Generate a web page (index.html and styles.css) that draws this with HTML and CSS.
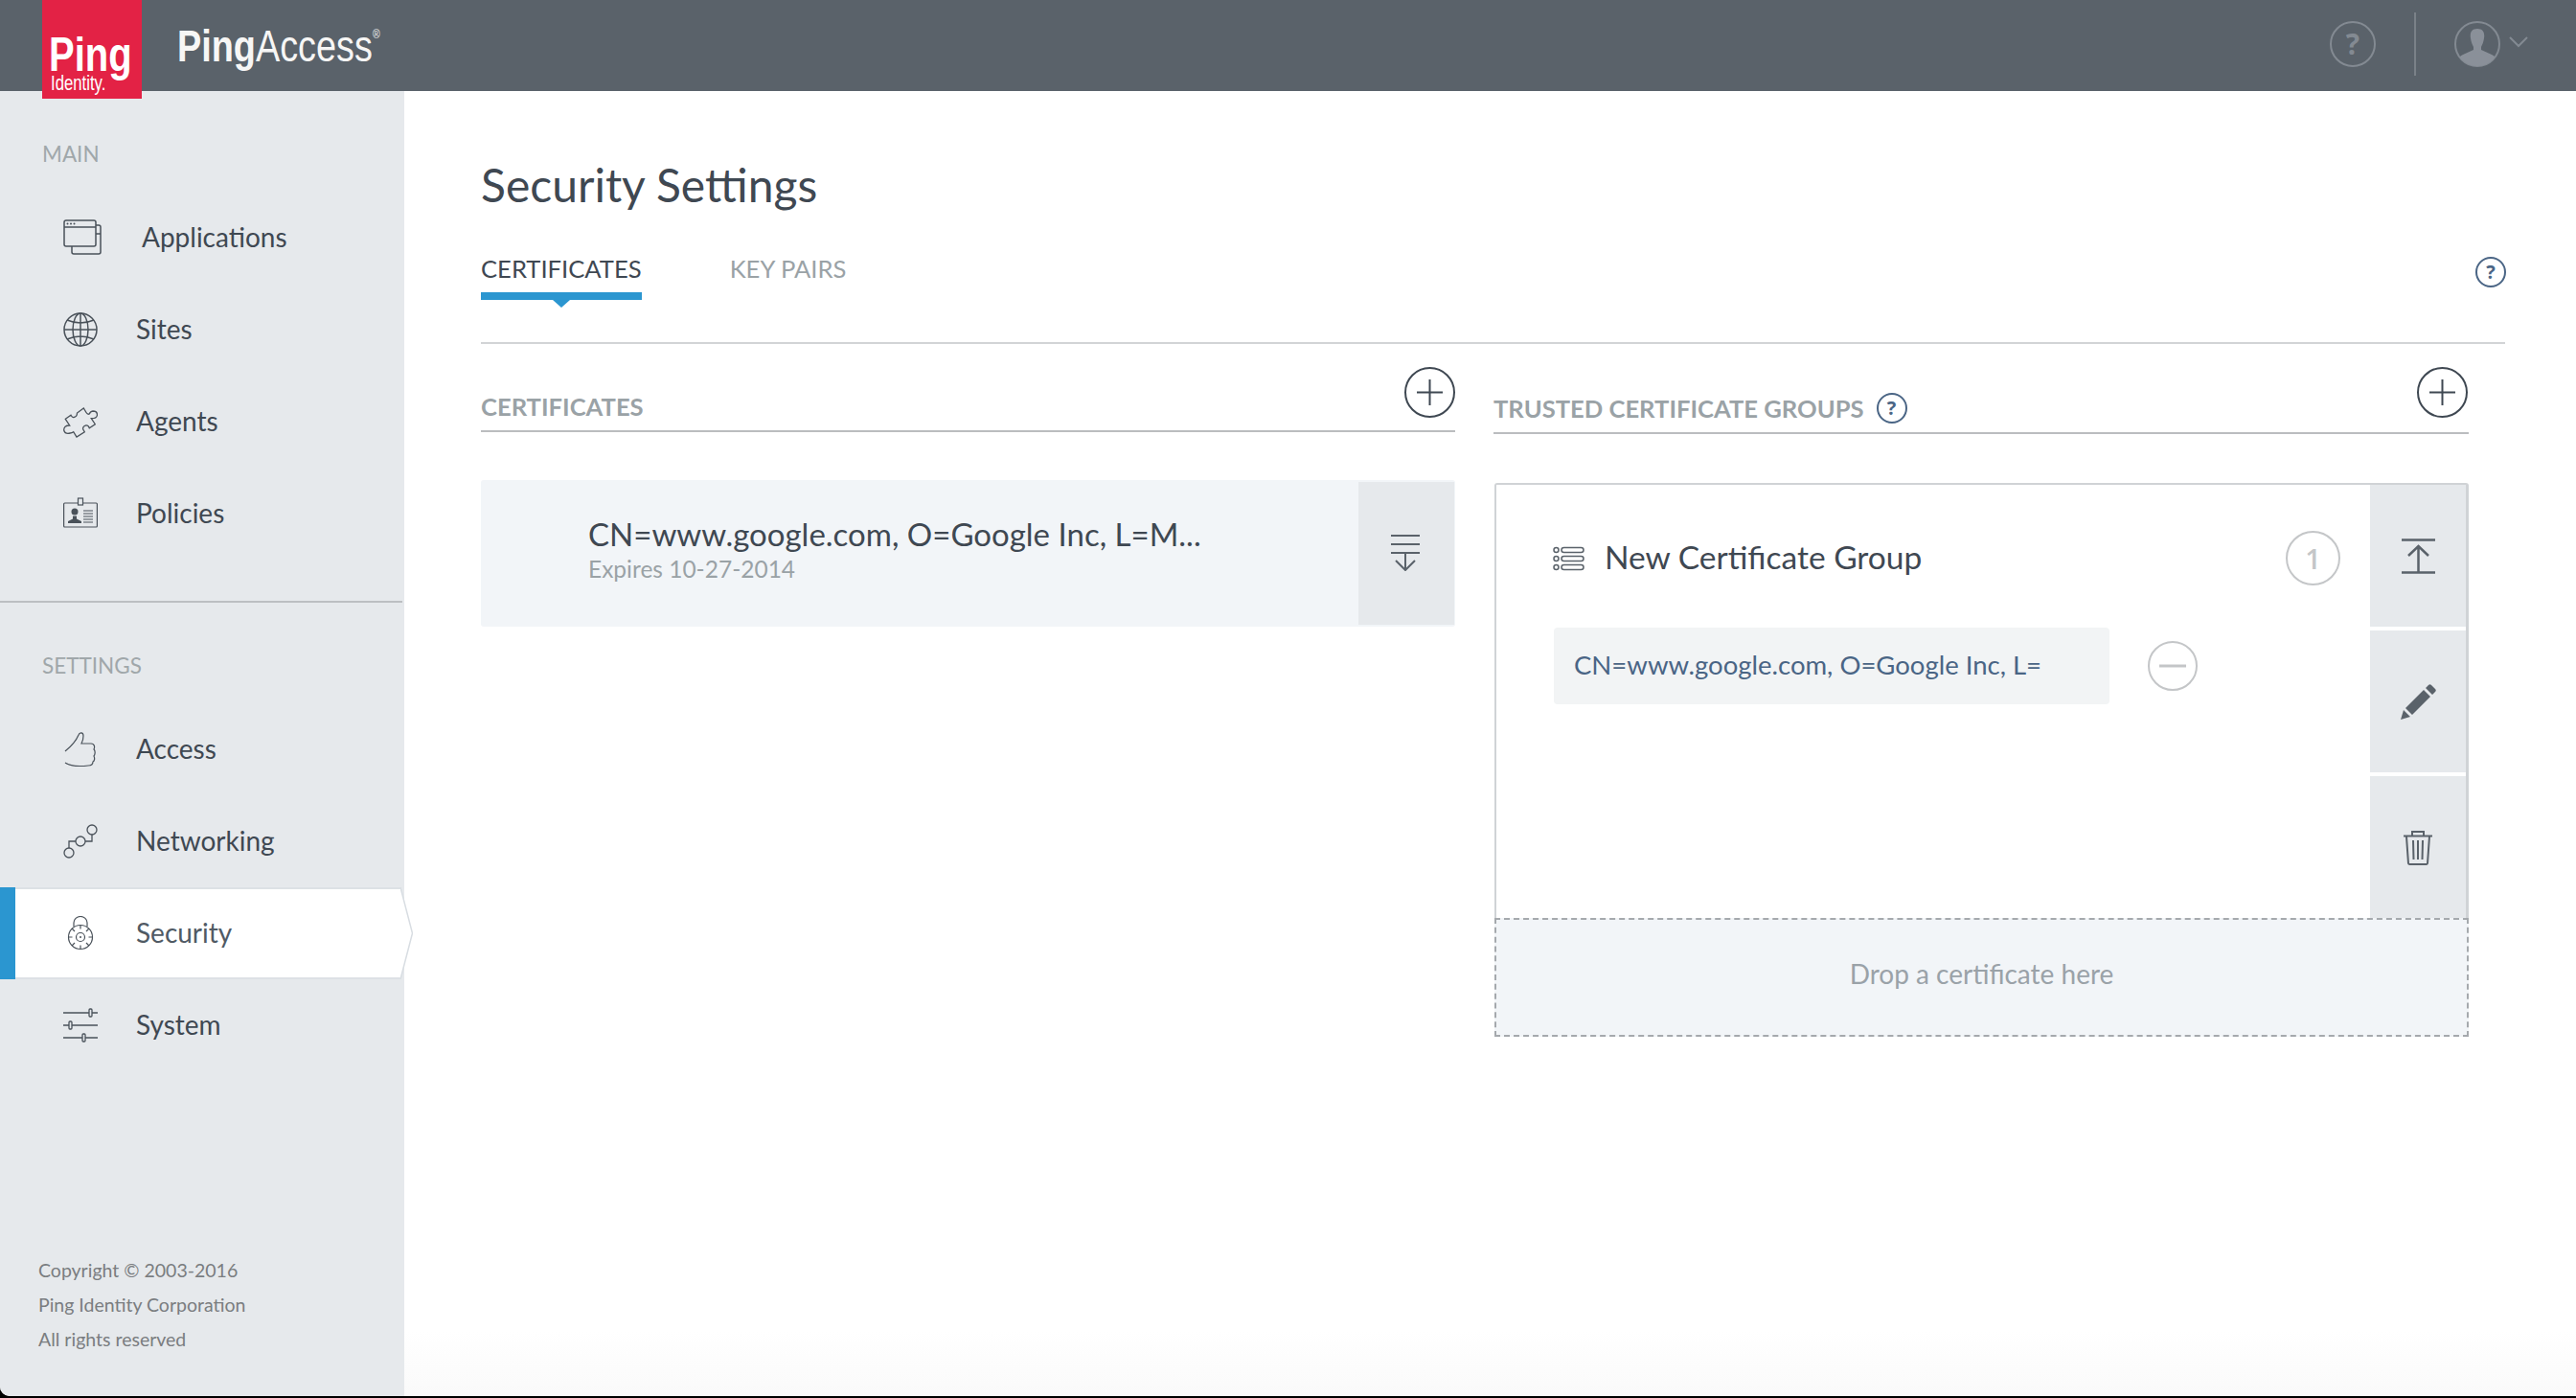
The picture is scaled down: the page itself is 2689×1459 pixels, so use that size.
FILE: index.html
```html
<!DOCTYPE html>
<html lang="en">
<head>
    <meta charset="UTF-8">
    <title>PingAccess - Security Settings</title>
    <link rel="stylesheet" href="styles.css">
</head>
<body>
<div class="shell">
    <header class="topbar">
        <div class="logo">
            <span class="logo-ping">Ping</span>
            <span class="logo-identity">Identity.</span>
        </div>
        <div class="brand"><b>Ping</b>Access<sup>®</sup></div>
        <div class="topbar-right">
            <span class="top-help">?</span>
            <span class="top-divider"></span>
            <svg class="top-user" viewBox="0 0 48 48">
                <defs><clipPath id="userClip"><circle cx="24" cy="24" r="23"/></clipPath></defs>
                <circle cx="24" cy="24" r="23" fill="none" stroke="#838a92" stroke-width="2"/>
                <path clip-path="url(#userClip)" fill="#8a9099" d="M24 8c-6 0-8 4-7 10 .5 4 2 7 3 9v3l-11 5c-2 1-3 2-4 3v12h38V38c-1-1-2-2-4-3l-11-5v-3c1-2 2.500-5 3-9 1-6-1-10-7-10z"/>
            </svg>
            <svg class="top-chevron" viewBox="0 0 20 12"><path d="M1 1l9 9 9-9" fill="none" stroke="#838a92" stroke-width="2"/></svg>
        </div>
    </header>

    <div class="layout">
        <aside class="sidebar">
            <div class="nav-label">MAIN</div>
            <a class="nav-item">
                <svg class="icon-app" viewBox="0 0 42 38"><g fill="none" stroke="#4a525a" stroke-width="1.500"><rect x="1" y="1" width="33" height="27" rx="2"/><path d="M1 8h33M34 6h3a2 2 0 0 1 2 2v26a2 2 0 0 1-2 2H11a2 2 0 0 1-2-2v-6M34 15h5"/></g><g fill="#4a525a"><circle cx="4.500" cy="4.500" r="1"/><circle cx="8" cy="4.500" r="1"/><circle cx="11.500" cy="4.500" r="1"/></g></svg>
                Applications
            </a>
            <a class="nav-item">
                <svg viewBox="0 0 36 36"><g fill="none" stroke="#4a525a" stroke-width="1.500"><circle cx="18" cy="18" r="17"/><ellipse cx="18" cy="18" rx="8" ry="17"/><path d="M18 1v34M1 18h34M4 8q14 6 28 0M4 28q14-6 28 0"/></g></svg>
                Sites
            </a>
            <a class="nav-item">
                <svg viewBox="0 0 36 36"><path fill="none" stroke="#4a525a" stroke-width="1.300" d="M2.300 15.300L8 11.300Q9.500 14 11 13.500Q14.500 13 14.500 9L21.300 4L24 8.500Q25.500 11 27.300 10Q28 7.500 31 7Q35.500 7 35.500 11Q35 15 29.300 14.700L33.300 20.700L27.300 24.700Q26 21.500 23.500 22Q20 23 20.700 26L22.300 28.700L14 34L10.700 28.700Q9 30 7.300 30Q2 31.500 .7 27Q.5 22 6.700 22Z"/></svg>
                Agents
            </a>
            <a class="nav-item">
                <svg viewBox="0 0 36 36"><g fill="none" stroke="#4a525a" stroke-width="1.200"><rect x="0.600" y="7" width="34.800" height="25" rx="1"/><rect x="15.500" y="2" width="5" height="7" fill="#e6e9ec"/><path d="M21 15h10M21 18h10M21 21h10M21 24h10M21 27h10"/></g><circle cx="12" cy="16" r="3.500" fill="#4a525a"/><path fill="#4a525a" d="M5 28v-2l5-2.500v-3h4v3l5 2.500v2z"/></svg>
                Policies
            </a>

            <div class="nav-sep"></div>

            <div class="nav-label nav-label-settings">SETTINGS</div>
            <a class="nav-item">
                <svg viewBox="0 0 36 36"><path fill="none" stroke="#4a525a" stroke-width="1.200" d="M2 20C7 16 13 10 16 3c1-3 5-3 5 1 0 3-1 6-2 8h10c4 0 4 4 3 6 2 2 1 6 0 7 1 2 1 5-1 6 0 3-2 4-5 4-8 1-18 1-24-3"/></svg>
                Access
            </a>
            <a class="nav-item">
                <svg viewBox="0 0 36 36"><g fill="none" stroke="#4a525a" stroke-width="1.300"><circle cx="6" cy="30" r="5"/><circle cx="18" cy="18" r="5"/><circle cx="30" cy="6" r="5"/><path d="M6 25v-7h7M23 18h7v-7"/></g></svg>
                Networking
            </a>
            <a class="nav-item active">
                <svg viewBox="-5 0 36 36"><g fill="none" stroke="#4a525a" stroke-width="1.200"><path d="M6 11V7a7 6.500 0 0 1 14 0v4"/><circle cx="13" cy="22" r="12.500"/><circle cx="13" cy="22" r="4.500"/><path d="M13 9.500v4M13 30.500v4M.500 22h4M21.500 22h4M4 13l3 3M22 13l-3 3M4 31l3-3M22 31l-3-3"/></g><circle cx="13" cy="22" r="1" fill="#4a525a"/></svg>
                Security
                <svg class="active-arrow" viewBox="0 0 13 96"><path d="M0 0l12.500 48L0 96" fill="#fff" stroke="#d8dde2" stroke-width="1.500"/></svg>
            </a>
            <a class="nav-item">
                <svg viewBox="0 0 36 36"><g stroke="#4a525a" stroke-width="1.300" fill="#e6e9ec"><path d="M0 5h36M0 18h36M0 31h36"/><rect x="27" y="1" width="3" height="8" rx="1"/><rect x="6" y="14" width="3" height="8" rx="1"/><rect x="20" y="27" width="3" height="8" rx="1"/></g></svg>
                System
            </a>

            <div class="copyright">
                <div>Copyright © 2003-2016</div>
                <div>Ping Identity Corporation</div>
                <div>All rights reserved</div>
            </div>
        </aside>

        <main class="content">
            <h1 class="page-title">Security Settings</h1>
            <div class="tabs">
                <a class="tab tab-active">CERTIFICATES</a>
                <a class="tab">KEY PAIRS</a>
                <span class="help-small tabs-help">?</span>
            </div>

            <div class="columns">
                <section>
                    <div class="section-head">
                        <span class="section-title">CERTIFICATES</span>
                        <svg class="add-btn" viewBox="0 0 53 53"><circle cx="26.500" cy="26.500" r="25.500" fill="none" stroke="#3f4852" stroke-width="2"/><path d="M26.500 13v27M13 26.500h27" stroke="#3f4852" stroke-width="2"/></svg>
                    </div>
                    <div class="cert-card">
                        <div class="cert-text">
                            <div class="cert-name">CN=www.google.com, O=Google Inc, L=M...</div>
                            <div class="cert-exp">Expires 10-27-2014</div>
                        </div>
                        <div class="cert-action">
                            <svg viewBox="0 0 30 38"><path d="M0 1h30M0 10h30M0 19h30M15 19v17M5 27l10 10 10-10" fill="none" stroke="#5a626a" stroke-width="2"/></svg>
                        </div>
                    </div>
                </section>

                <section>
                    <div class="section-head section-head-right">
                        <span class="section-title">TRUSTED CERTIFICATE GROUPS</span>
                        <span class="help-small">?</span>
                        <svg class="add-btn" viewBox="0 0 53 53"><circle cx="26.500" cy="26.500" r="25.500" fill="none" stroke="#3f4852" stroke-width="2"/><path d="M26.500 13v27M13 26.500h27" stroke="#3f4852" stroke-width="2"/></svg>
                    </div>
                    <div class="group-panel">
                        <div class="group-body">
                            <div class="group-head">
                                <svg class="list-icon" viewBox="0 0 33 26"><g fill="none" stroke="#5a626a" stroke-width="1.500"><circle cx="3.500" cy="4" r="2.500"/><circle cx="3.500" cy="13" r="2.500"/><circle cx="3.500" cy="22" r="2.500"/><rect x="9" y="1.500" width="23" height="5" rx="2.500"/><rect x="9" y="10.500" width="23" height="5" rx="2.500"/><rect x="9" y="19.500" width="23" height="5" rx="2.500"/></g></svg>
                                <span class="group-name">New Certificate Group</span>
                                <span class="group-count">1</span>
                            </div>
                            <div class="group-row">
                                <div class="chip">CN=www.google.com, O=Google Inc, L=</div>
                                <svg class="minus-btn" viewBox="0 0 52 52"><circle cx="26" cy="26" r="25" fill="none" stroke="#c4c6c8" stroke-width="2"/><path d="M12 26h28" stroke="#c4c6c8" stroke-width="3"/></svg>
                            </div>
                        </div>
                        <div class="group-side">
                            <div class="side-btn">
                                <svg width="35" height="37" viewBox="0 0 35 37"><path d="M0 1.500h35M0 35.500h35M17.500 9v26M7 18l10.500-10L28 18" fill="none" stroke="#5a626a" stroke-width="2.500"/></svg>
                            </div>
                            <div class="side-btn">
                                <svg width="37" height="37" viewBox="0 0 37 37"><path fill="#5a626a" d="M0 37l3-10 7 7zM5 25L24 6l7 7-19 19zM26 4l3-3c1-1 2-1 3 0l4 4c1 1 1 2 0 3l-3 3z"/></svg>
                            </div>
                            <div class="side-btn">
                                <svg width="30" height="37" viewBox="0 0 30 37"><path d="M0 6.500h30M9 6V2h12v4M3 7l2 28a1.500 1.500 0 0 0 1.500 1h17a1.500 1.500 0 0 0 1.500-1l2-28M10 11l.5 20M15 11v20M20 11l-.5 20" fill="none" stroke="#5a626a" stroke-width="2"/></svg>
                            </div>
                        </div>
                    </div>
                    <div class="dropzone">Drop a certificate here</div>
                </section>
            </div>
        </main>
    </div>
</div>
</body>
</html>
```

FILE: styles.css
```css
html, body {
    margin: 0;
    background-color: #000;
}
body {
    font-family: Lato, "Open Sans", sans-serif;
    color: #3f4852;
}
.shell {
    height: 1457px;
    display: flex;
    flex-direction: column;
    background-color: #fff;
    border-bottom-left-radius: 10px;
    overflow: hidden;
}

/* top bar */
.topbar {
    height: 95px;
    flex-shrink: 0;
    background-color: #5a626a;
    display: flex;
    position: relative;
    z-index: 2;
}
.logo {
    width: 104px;
    height: 103px;
    flex-shrink: 0;
    margin-left: 44px;
    background-color: #e32245;
    color: #fff;
    font-family: "Liberation Sans", sans-serif;
    box-sizing: border-box;
    padding: 33px 0 0 7px;
}
.logo-ping {
    display: block;
    font-size: 50px;
    font-weight: 700;
    line-height: 48px;
    transform: scaleX(.8);
    transform-origin: left;
}
.logo-identity {
    display: block;
    font-size: 22px;
    line-height: 16px;
    margin: -2px 0 0 2px;
    transform: scaleX(.76);
    transform-origin: left;
}
.brand {
    margin-left: 37px;
    margin-top: 23px;
    font-family: "Liberation Sans", sans-serif;
    font-size: 47px;
    line-height: 50px;
    color: #f7f6f5;
    height: 50px;
    white-space: nowrap;
    transform: scaleX(.805);
    transform-origin: left;
}
.brand b {
    font-weight: 700;
}
.brand sup {
    font-size: 13px;
    line-height: 0;
    vertical-align: 24px;
}
.topbar-right {
    margin-left: auto;
    display: flex;
    align-items: center;
    padding-right: 50px;
    height: 92px;
}
.top-help {
    width: 44px;
    height: 44px;
    border: 2px solid #838a92;
    border-radius: 50%;
    color: #838a92;
    font-family: "Open Sans", sans-serif;
    font-weight: 700;
    font-size: 30px;
    line-height: 44px;
    text-align: center;
}
.top-divider {
    width: 2px;
    height: 66px;
    background-color: #7a8188;
    margin: 0 40px;
}
.top-user {
    width: 48px;
    height: 48px;
}
.top-chevron {
    width: 20px;
    height: 12px;
    margin: -5px 0 0 9px;
}

/* sidebar */
.layout {
    flex: 1;
    display: flex;
    min-height: 0;
}
.sidebar {
    width: 422px;
    flex-shrink: 0;
    background-color: #e6e9ec;
    display: flex;
    flex-direction: column;
    padding-top: 51px;
    box-sizing: border-box;
}
.nav-label {
    padding-left: 44px;
    font-size: 22.500px;
    line-height: 30px;
    color: #a0a7aa;
    margin-bottom: 24px;
}
.nav-label-settings {
    margin-top: 51px;
    margin-bottom: 24px;
}
.nav-sep {
    width: 420px;
    height: 2px;
    background-color: #bcbfc2;
    margin-top: 43px;
}
.nav-item {
    height: 96px;
    box-sizing: border-box;
    display: flex;
    align-items: center;
    gap: 40px;
    padding: 0 0 2px 66px;
    font-size: 28px;
    color: #3f4852;
    position: relative;
}
.nav-item svg {
    width: 36px;
    height: 36px;
    flex-shrink: 0;
    margin-top: 2px;
}
.nav-item svg.icon-app {
    width: 42px;
    height: 38px;
}
.nav-item.active {
    width: 418px;
    background-color: #fff;
    border-top: 2px solid #dde1e5;
    border-bottom: 2px solid #dde1e5;
    color: #505a64;
}
.nav-item.active::before {
    content: "";
    position: absolute;
    left: 0;
    top: -2px;
    bottom: -2px;
    width: 16px;
    background-color: #2b96d0;
}
.nav-item svg.active-arrow {
    position: absolute;
    right: -13px;
    top: -2px;
    width: 13px;
    height: 96px;
    margin-top: 0;
}
.copyright {
    margin-top: auto;
    padding: 0 0 41px 40px;
    font-size: 19.500px;
    line-height: 36px;
    color: #7a7d80;
}

/* main */
.content {
    flex: 1;
    min-width: 0;
    box-sizing: border-box;
    padding: 70px 74px 0 80px;
    background: linear-gradient(to bottom, #fff 95%, #fafafa 100%);
}
.page-title {
    margin: 0;
    font-size: 48px;
    font-weight: 400;
    line-height: 56px;
    color: #3f4852;
}
.tabs {
    display: flex;
    gap: 92px;
    height: 138px;
    box-sizing: border-box;
    border-bottom: 2px solid #d2d4d6;
    align-items: flex-start;
    padding-top: 37px;
}
.tab {
    font-size: 25.600px;
    line-height: 44px;
    color: #9aa2a6;
    padding-bottom: 3px;
    position: relative;
}
.tab-active {
    color: #3f4852;
    border-bottom: 8px solid #2b96d0;
}
.tab-active::after {
    content: "";
    position: absolute;
    left: 50%;
    bottom: -16px;
    margin-left: -9px;
    border-left: 9px solid transparent;
    border-right: 9px solid transparent;
    border-top: 8px solid #2b96d0;
}
.help-small {
    width: 28px;
    height: 28px;
    flex-shrink: 0;
    border: 2px solid #4a6585;
    border-radius: 50%;
    color: #4a6585;
    font-family: "Open Sans", sans-serif;
    font-weight: 700;
    font-size: 20px;
    line-height: 28px;
    text-align: center;
}
.tabs-help {
    margin-left: auto;
    margin-top: 10px;
    margin-right: -1px;
}
.columns {
    display: grid;
    grid-template-columns: 1017px 1018px;
    gap: 40px;
    padding-top: 24px;
}
.section-head {
    height: 68px;
    display: flex;
    border-bottom: 2px solid #bbbdbf;
    box-sizing: border-box;
}
.section-head-right {
    height: 70px;
    padding-right: 1px;
}
.section-title {
    align-self: flex-end;
    font-size: 25.600px;
    font-weight: 700;
    line-height: 34px;
    margin-bottom: 8px;
    color: #9aa2a6;
    white-space: nowrap;
}
.section-head .help-small {
    align-self: flex-end;
    margin: 0 0 9px 13px;
}
.add-btn {
    width: 53px;
    height: 53px;
    margin-left: auto;
}
.cert-card {
    margin-top: 50px;
    height: 153px;
    background-color: #f2f5f8;
    border-radius: 3px;
    display: flex;
}
.cert-text {
    flex: 1;
    padding: 37px 0 0 112px;
}
.cert-name {
    font-size: 33px;
    line-height: 38px;
    color: #3f4852;
}
.cert-exp {
    font-size: 24.500px;
    line-height: 36px;
    color: #9aa2a6;
}
.cert-action {
    width: 100px;
    margin: 2px 1px;
    background-color: #e6e9ec;
    display: flex;
    justify-content: center;
    padding: 55px 2px 0 0;
    box-sizing: border-box;
}
.cert-action svg {
    width: 30px;
    height: 38px;
}
.group-panel {
    margin-top: 51px;
    margin-left: 1px;
    height: 454px;
    box-sizing: border-box;
    display: flex;
    border: 2px solid #d0d3d6;
    border-right-width: 3px;
    border-bottom: none;
    border-radius: 3px 3px 0 0;
}
.group-body {
    flex: 1;
    min-width: 0;
    box-sizing: border-box;
    padding: 48px 31px 0 59px;
}
.group-head {
    height: 57px;
    display: flex;
    align-items: center;
}
.list-icon {
    width: 33px;
    height: 26px;
}
.group-name {
    margin: -3px 0 0 21px;
    font-size: 33.500px;
    color: #3f4852;
}
.group-count {
    margin-left: auto;
    width: 53px;
    height: 53px;
    border: 2px solid #c4c6c8;
    border-radius: 50%;
    text-align: center;
    font-family: "Open Sans", sans-serif;
    font-size: 29px;
    line-height: 53px;
    font-weight: 600;
    color: #c4c6c8;
}
.group-row {
    margin-top: 44px;
    display: flex;
    align-items: center;
    gap: 40px;
}
.chip {
    width: 580px;
    height: 80px;
    box-sizing: border-box;
    padding-left: 21px;
    margin-left: 1px;
    background-color: #f2f4f5;
    border-radius: 4px;
    font-size: 27.500px;
    line-height: 78px;
    color: #4a6585;
}
.minus-btn {
    width: 52px;
    height: 52px;
}
.group-side {
    width: 100px;
    display: flex;
    flex-direction: column;
    gap: 4px;
}
.side-btn {
    flex: 1;
    background-color: #e6e9ec;
    display: flex;
    align-items: center;
    justify-content: center;
}
.dropzone {
    height: 124px;
    margin-left: 1px;
    box-sizing: border-box;
    border: 2px dashed #a5a9ad;
    background-color: #f2f5f8;
    text-align: center;
    font-size: 28px;
    line-height: 113px;
    color: #9aa2a8;
}
```
